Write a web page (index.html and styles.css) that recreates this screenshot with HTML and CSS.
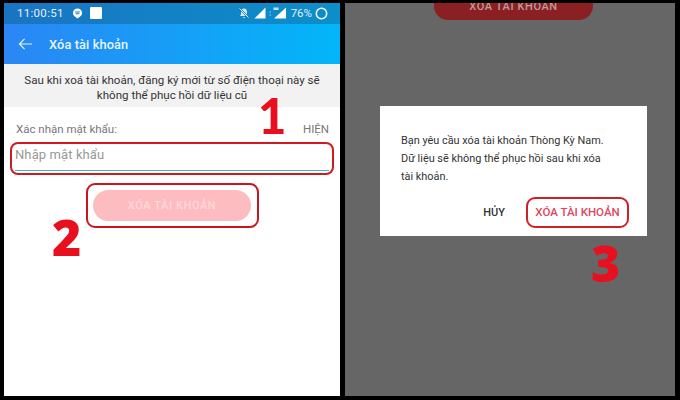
FILE: index.html
```html
<!DOCTYPE html>
<html lang="vi">
<head>
<meta charset="utf-8">
<title>Xóa tài khoản</title>
<link rel="stylesheet" href="styles.css">
</head>
<body>
<main class="stage">
  <section class="phone phone-left">
    <div class="statusbar">
      <div class="status-left">
        <span class="clock">11:00:51</span>
        <svg class="ic-chat" viewBox="0 0 12 12"><path d="M6 .5a5 5 0 0 1 5 5c0 2.600-2.200 4.200-5 6-2.800-1.800-5-3.400-5-6a5 5 0 0 1 5-5z" fill="#fff"/><path d="M3.500 4.300h5M4 6.300h4" stroke="#1b78c0" stroke-width="1.200"/></svg>
        <span class="ic-square"></span>
      </div>
      <div class="status-right">
        <svg class="ic-bell" viewBox="0 0 12 12"><path d="M6 1.500c-2 0-3 1.500-3 3.300V7.500L2 9h8L9 7.500V4.800C9 3 8 1.500 6 1.500zM5 10h2a1 1 0 0 1-2 0z" fill="#dbe9f4"/><path d="M1.500 1.500l9 9" stroke="#1b78c0" stroke-width="1.800"/><path d="M1.500 1.500l9 9" stroke="#fff" stroke-width=".9"/></svg>
        <svg class="ic-signal" viewBox="0 0 12 12"><path d="M11.500 .5v11H.5z" fill="#fff"/></svg>
        <svg class="ic-signal4g" viewBox="0 0 17 12"><path d="M17 .5v11H5z" fill="#fff"/><path d="M.5 5h1.500M.5 8h1.500" stroke="#9fd0ea" stroke-width="1"/><path d="M4.500 .5h5v2.500h-5z" fill="#bfe0f2"/></svg>
        <span class="battery-text">76%</span>
        <svg class="ic-ring" viewBox="0 0 13 13"><circle cx="6.500" cy="6.500" r="5.200" fill="none" stroke="#fff" stroke-width="1.500"/></svg>
      </div>
    </div>
    <header class="appbar">
      <svg class="ic-back" viewBox="0 0 16 14"><path d="M15 7H1.500M7 1.500L1.500 7 7 12.500" fill="none" stroke="#e6f4ff" stroke-width="1.200"/></svg>
      <h1 class="appbar-title">Xóa tài khoản</h1>
    </header>
    <p class="notice">Sau khi xoá tài khoản, đăng ký mới từ số điện thoại này sẽ<br>không thể phục hồi dữ liệu cũ</p>
    <div class="form">
      <div class="label-row"><span>Xác nhận mật khẩu:</span><span>HIỆN</span></div>
      <div class="field-frame">
        <div class="field"><span class="placeholder">Nhập mật khẩu</span></div>
      </div>
      <div class="action">
        <div class="btn-frame"><button class="btn-delete" type="button">XÓA TÀI KHOẢN</button></div>
      </div>
    </div>
    <span class="step step-1">1</span>
    <span class="step step-2">2</span>
  </section>

  <section class="phone phone-right">
    <div class="peek-btn">XÓA TÀI KHOẢN</div>
    <div class="dialog">
      <p class="dialog-text">Bạn yêu cầu xóa tài khoản Thòng Kỳ Nam.<br>Dữ liệu sẽ không thể phục hồi sau khi xóa<br>tài khoản.</p>
      <div class="dialog-actions">
        <span class="dlg-cancel">HỦY</span>
        <span class="dlg-confirm">XÓA TÀI KHOẢN</span>
      </div>
    </div>
    <span class="step step-3">3</span>
  </section>
</main>
</body>
</html>
```
FILE: styles.css
```css
* { box-sizing: border-box; }
html, body { margin: 0; padding: 0; }
body { width: 680px; height: 400px; background: #000; overflow: hidden; font-family: Roboto, "Noto Sans", sans-serif; }
.stage { display: flex; gap: 5px; padding: 3px 5px 4px 4px; height: 400px; }
.phone { position: relative; height: 393px; overflow: hidden; }
.phone-left { width: 336px; background: #fff; display: flex; flex-direction: column; }
.phone-right { width: 330px; background: #666; display: flex; flex-direction: column; align-items: flex-start; }

.statusbar { height: 21px; flex: none; display: flex; justify-content: space-between; align-items: center; padding: 0 12px 1px 13px; background: linear-gradient(90deg, #1a74c2, #0b8fc9); color: #e4f0f8; font-size: 11.500px; }
.status-left, .status-right { display: flex; align-items: center; }
.clock { letter-spacing: .3px; }
.ic-chat { width: 11px; height: 11px; margin-left: 8px; }
.ic-square { width: 12px; height: 12px; margin-left: 7px; background: #fff; border-radius: 1px; }
.ic-bell { width: 12px; height: 12px; }
.ic-signal { width: 12px; height: 12px; margin-left: 4px; }
.ic-signal4g { width: 17px; height: 12px; margin-left: 3px; }
.battery-text { margin-left: 5px; font-size: 11.500px; }
.ic-ring { width: 13px; height: 13px; margin-left: 3px; }

.appbar { height: 40px; flex: none; display: flex; align-items: center; padding: 0 0 0 14px; background: linear-gradient(90deg, #2b86f4, #02b6f9); }
.ic-back { width: 15px; height: 14px; flex: none; }
.appbar-title { margin: 0 0 0 16px; font-size: 12.800px; font-weight: 500; color: #e8f5ff; letter-spacing: .1px; }

.notice { margin: 0; height: 43px; flex: none; padding-top: 9px; background: #f2f2f2; text-align: center; font-size: 11.550px; line-height: 15px; color: #333; }

.form { padding: 14px 6px 0; }
.label-row { display: flex; justify-content: space-between; margin: 0 5px 0 6px; height: 16px; font-size: 11.500px; line-height: 16px; color: #777; }
.field-frame { height: 33px; margin-top: 5px; padding: 2px 3px; border: 2px solid #d01a22; border-radius: 8px; }
.field { height: 25px; border-bottom: 1px solid #35bccb; }
.placeholder { display: block; font-size: 13px; line-height: 18px; letter-spacing: .1px; color: #999; }
.action { display: flex; justify-content: center; margin-top: 8px; }
.btn-frame { width: 173px; height: 45px; border: 2px solid #c8161f; border-radius: 9px; display: flex; align-items: center; justify-content: center; }
.btn-delete { width: 158px; height: 31px; border: 0; border-radius: 16px; background: #fdbcc0; color: #fdd8da; font: 500 11px Roboto, sans-serif; letter-spacing: .6px; padding: 0; }

.step { position: absolute; font-family: "Open Sans", sans-serif; font-weight: 800; font-size: 50px; line-height: 50px; color: #e8101e; }
.step-1 { left: 254px; top: 87px; font-family: Lato, "Open Sans", sans-serif; font-weight: 900; font-size: 49px; }
.step-2 { left: 48px; top: 209px; }
.step-3 { left: 246px; top: 235px; }

.peek-btn { width: 159px; height: 17px; margin-left: 89px; flex: none; overflow: hidden; border-radius: 0 0 14px 14px; background: #8a2024; color: #c09a9a; font-size: 11px; font-weight: 500; letter-spacing: .6px; line-height: 8px; text-align: center; }

.dialog { margin: 86px 0 0 35px; width: 267px; height: 130px; background: #fff; padding: 26px 16px 0 21px; }
.dialog-text { margin: 0; font-size: 10.900px; line-height: 17.800px; color: #333; white-space: nowrap; }
.dialog-actions { display: flex; justify-content: flex-end; align-items: center; margin-top: 12px; gap: 21px; font-size: 11px; font-weight: 500; }
.dlg-cancel { color: #333; }
.dlg-confirm { color: #e0475f; font-size: 11.500px; text-align: center; height: 31px; line-height: 27px; width: 103px; border: 2px solid #cf2028; border-radius: 9px; margin-right: 2px; white-space: nowrap; }
```
